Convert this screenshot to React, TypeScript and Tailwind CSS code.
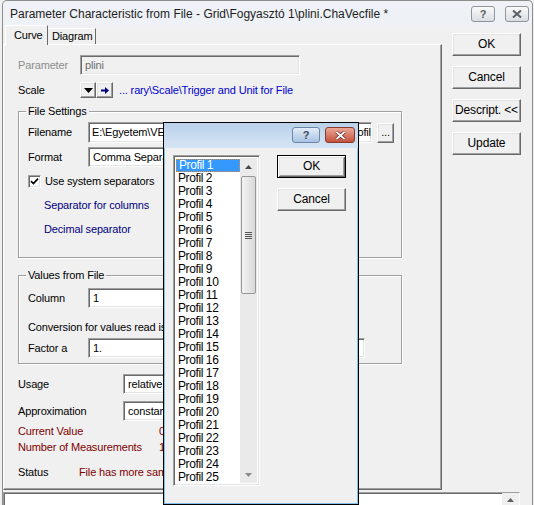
import React from 'react';

const ui = "font-['Liberation_Sans',Arial,sans-serif]";

const raised =
  'border border-t-white border-l-white border-r-[#696969] border-b-[#696969] shadow-[inset_-1px_-1px_0_#a0a0a0,inset_1px_1px_0_#e3e3e3]';
const sunken =
  'border border-t-[#a0a0a0] border-l-[#a0a0a0] border-r-white border-b-white shadow-[inset_1px_1px_0_#696969,inset_-1px_-1px_0_#e3e3e3]';

function Btn({ children, def = false }: { children: React.ReactNode; def?: boolean }) {
  return (
    <div
      className={`flex h-[23px] w-[69px] items-center justify-center bg-[#f0f0f0] text-[12px] ${
        def
          ? 'border border-black shadow-[inset_1px_1px_0_white,inset_-1px_-1px_0_#696969,inset_2px_2px_0_#e3e3e3,inset_-2px_-2px_0_#a0a0a0]'
          : raised
      }`}
    >
      {children}
    </div>
  );
}

function Field({ w, children, gray = false }: { w: string; children?: React.ReactNode; gray?: boolean }) {
  return (
    <div
      className={`flex h-[20px] shrink-0 items-center overflow-hidden whitespace-nowrap pl-[4px] ${sunken} ${w} ${
        gray ? 'bg-[#f0f0f0] text-[#6d6d6d]' : 'bg-white'
      }`}
    >
      {children}
    </div>
  );
}

function Group({ title, h, children }: { title: string; h: string; children: React.ReactNode }) {
  return (
    <div
      className={`relative w-[384px] ${h} border border-[#a0a0a0] shadow-[1px_1px_0_white,inset_1px_1px_0_white] pl-[9px]`}
    >
      <span className="absolute left-[7px] top-[-7px] bg-[#f0f0f0] px-[2px]">{title}</span>
      {children}
    </div>
  );
}

function TitleBtn({ children }: { children: React.ReactNode }) {
  return (
    <div className="flex h-[16px] w-[24px] items-center justify-center rounded-[3px] border border-[#8f959c] bg-gradient-to-b from-[#fafafa] to-[#dadde2] text-[11px] font-bold text-[#5a5f66]">
      {children}
    </div>
  );
}

const profiles = Array.from({ length: 25 }, (_, i) => `Profil ${i + 1}`);

export default function App() {
  return (
    <div
      className={`relative h-[505px] w-[534px] overflow-hidden bg-[#f0f0f0] text-[11px] leading-[13px] tracking-[-0.15px] text-black ${ui}`}
    >
      {/* Main window */}
      <div className="ml-[2px] flex h-[505px] w-[531px] flex-col overflow-hidden rounded-t-[5px] border-x border-t border-[#8c8c8c]">
        {/* Title bar */}
        <div className="flex h-[24px] shrink-0 items-center gap-[10px] rounded-t-[5px] bg-[#eef1f5] pl-[7px] pr-[3px] pt-[2px]">
          <span className="flex-1 text-[12px] tracking-normal text-[#1e1e1e]">
            Parameter Characteristic from File - Grid\Fogyasztó 1\plini.ChaVecfile *
          </span>
          <TitleBtn>?</TitleBtn>
          <TitleBtn>
            <svg width="10" height="8" viewBox="0 0 10 8">
              <path d="M1 0.5l8 7M9 0.5l-8 7" stroke="#5a5f66" strokeWidth="2" />
            </svg>
          </TitleBtn>
        </div>

        <div className="flex shrink-0">
          {/* Tabs + panel */}
          <div className="w-[439px]">
            <div className="flex h-[19px] items-end pl-[2px]">
              <div className="relative z-10 mb-[-1px] flex h-[20px] w-[43px] items-start border-l border-t border-r border-l-white border-t-white border-r-[#696969] bg-[#f0f0f0] pl-[8px] pt-[3px]">
                Curve
              </div>
              <div className="flex h-[16px] w-[48px] items-start border-t border-r border-t-white border-r-[#696969] pl-[4px] pt-[1px]">
                Diagram
              </div>
            </div>
            <div className="flex h-[446px] flex-col border border-t-white border-l-white border-r-[#696969] border-b-[#696969] pl-[14px] shadow-[inset_-1px_-1px_0_#a0a0a0]">
              {/* Parameter */}
              <div className="mt-[10px] flex h-[20px] items-center">
                <span className="w-[62px] text-[#8d8d8d]">Parameter</span>
                <Field w="w-[220px]" gray>
                  plini
                </Field>
              </div>
              {/* Scale */}
              <div className="mt-[7px] flex h-[16px] items-center">
                <span className="w-[62px]">Scale</span>
                <div className={`flex h-[16px] w-[16px] items-center justify-center bg-[#f0f0f0] ${raised}`}>
                  <svg width="9" height="5" viewBox="0 0 9 5">
                    <path d="M0 0h9L4.5 5z" fill="black" />
                  </svg>
                </div>
                <div className={`flex h-[16px] w-[17px] items-center justify-center bg-[#f0f0f0] ${raised}`}>
                  <svg width="8" height="7" viewBox="0 0 8 7">
                    <path d="M0 2.5h4V0l4 3.5L4 7V4.5H0z" fill="#00007f" />
                  </svg>
                </div>
                <span className="ml-[6px] text-[#0000cc]">... rary\Scale\Trigger and Unit for File</span>
              </div>

              {/* File Settings */}
              <div className="mt-[13px]">
                <Group title="File Settings" h="h-[147px]">
                  <div className="mt-[10px] flex h-[21px] items-center">
                    <span className="w-[60px]">Filename</span>
                    <div className={`flex h-[21px] w-[284px] items-center overflow-hidden whitespace-nowrap bg-white pl-[3px] ${sunken}`}>
                      E:\Egyetem\VEM\Villamosenergia-rendszerek\Adatok\profil_1.csv
                    </div>
                    <div className={`ml-[5px] flex h-[20px] w-[17px] items-end justify-center bg-[#f0f0f0] pb-[3px] ${raised}`}>
                      ...
                    </div>
                  </div>
                  <div className="mt-[4px] flex h-[20px] items-center">
                    <span className="w-[60px]">Format</span>
                    <Field w="w-[200px]">Comma Separated Values</Field>
                  </div>
                  <div className="mt-[8px] flex h-[13px] items-center">
                    <div className={`flex h-[13px] w-[13px] items-center justify-center bg-white ${sunken}`}>
                      <svg width="9" height="9" viewBox="0 0 9 9">
                        <path d="M1 4.2l2.4 2.4L8 1.6" stroke="black" strokeWidth="1.7" fill="none" />
                      </svg>
                    </div>
                    <span className="ml-[4px]">Use system separators</span>
                  </div>
                  <div className="ml-[16px] mt-[9px] flex h-[16px] items-center text-[#000080]">Separator for columns</div>
                  <div className="ml-[16px] mt-[8px] flex h-[16px] items-center text-[#000080]">Decimal separator</div>
                </Group>
              </div>

              {/* Values from File */}
              <div className="mt-[17px]">
                <Group title="Values from File" h="h-[89px]">
                  <div className="mt-[12px] flex h-[20px] items-center">
                    <span className="w-[60px]">Column</span>
                    <Field w="w-[200px]">1</Field>
                  </div>
                  <div className="mt-[11px] flex h-[16px] w-[136px] items-center overflow-hidden whitespace-nowrap">
                    Conversion for values read is
                  </div>
                  <div className="mt-[3px] flex h-[20px] items-center">
                    <span className="w-[60px]">Factor a</span>
                    <Field w="w-[277px]">1.</Field>
                  </div>
                </Group>
              </div>

              {/* Usage / Approximation */}
              <div className="mt-[10px] flex h-[20px] items-center">
                <span className="w-[105px]">Usage</span>
                <Field w="w-[150px]">relative in %</Field>
              </div>
              <div className="mt-[7px] flex h-[20px] items-center">
                <span className="w-[105px]">Approximation</span>
                <Field w="w-[150px]">constant</Field>
              </div>
              <div className="mt-[3px] flex h-[14px] items-center text-[#800000]">
                <span className="w-[141px]">Current Value</span>
                <span>0</span>
              </div>
              <div className="mt-[2px] flex h-[14px] items-center text-[#800000]">
                <span className="w-[141px]">Number of Measurements</span>
                <span>1</span>
              </div>
              <div className="mt-[11px] flex h-[14px] items-center">
                <span className="w-[61px]">Status</span>
                <span className="w-[84px] overflow-hidden whitespace-nowrap text-[#800000]">File has more samples</span>
              </div>
            </div>
          </div>

          {/* Right buttons */}
          <div className="flex flex-col gap-[10px] pl-[10px] pt-[8px]">
            <Btn>OK</Btn>
            <Btn>Cancel</Btn>
            <Btn>Descript. &lt;&lt;</Btn>
            <Btn>Update</Btn>
          </div>
        </div>

        {/* Description edit */}
        <div className={`mt-[2px] flex h-[20px] w-[517px] shrink-0 justify-end bg-white ${sunken}`}>
          <div className="flex h-full w-[17px] justify-center bg-[#f0f0f0] pt-[5px]">
            <svg width="7" height="4" viewBox="0 0 7 4">
              <path d="M0 4L3.5 0L7 4z" fill="#606060" />
            </svg>
          </div>
        </div>
      </div>

      {/* Popup selection dialog */}
      <div className="absolute left-[163px] top-[122px] flex h-[383px] w-[196px] flex-col border border-black bg-[#f0f0f0] shadow-[inset_0_0_0_1px_#7fc0ef]">
        <div className="flex h-[25px] shrink-0 items-start justify-end gap-[5px] bg-gradient-to-b from-[#b9d1ea] to-[#d6e5f4] pr-[3px] pt-[4px]">
          <div className="flex h-[16px] w-[28px] items-center justify-center rounded-[3px] border border-[#6f87a6] bg-gradient-to-b from-[#e3ecf7] to-[#a9c3e3] text-[11px] font-bold text-[#3c4a5c]">
            ?
          </div>
          <div className="flex h-[16px] w-[30px] items-center justify-center rounded-[3px] border border-[#8b3a2d] bg-gradient-to-b from-[#e9a797] to-[#c4513c]">
            <svg width="11" height="9" viewBox="0 0 11 9">
              <path d="M1.5 1l8 7M9.5 1l-8 7" stroke="#5a1d14" strokeWidth="3.2" />
              <path d="M1.5 1l8 7M9.5 1l-8 7" stroke="white" strokeWidth="1.8" />
            </svg>
          </div>
        </div>
        <div className="mt-[7px] flex pl-[9px]">
          {/* Listbox */}
          <div className={`flex h-[331px] w-[87px] bg-white p-[2px] ${sunken}`}>
            <div className="flex-1 overflow-hidden pt-[1px] text-[12px] leading-[13px] tracking-[-0.4px]">
              {profiles.map((p, i) => (
                <div
                  key={p}
                  className={`h-[13px] whitespace-nowrap pl-[2px] ${
                    i === 0 ? 'border border-dotted border-[#e08a3c] bg-[#3399ff] pl-[1px] leading-[11px] text-white' : ''
                  }`}
                >
                  {p}
                </div>
              ))}
            </div>
            {/* scrollbar */}
            <div className="flex w-[17px] flex-col items-center bg-[#eaeaea]">
              <div className="flex h-[17px] w-full items-center justify-center">
                <svg width="7" height="4" viewBox="0 0 7 4">
                  <path d="M0 4L3.5 0L7 4z" fill="#4a4a4a" />
                </svg>
              </div>
              <div className="mt-[1px] flex h-[118px] w-[15px] items-center justify-center rounded-[2px] border border-[#979797] bg-gradient-to-r from-[#f3f3f3] to-[#d9d9d9]">
                <div className="flex flex-col gap-[1px]">
                  <div className="h-[1px] w-[7px] bg-[#555]" />
                  <div className="h-[1px] w-[7px] bg-[#555]" />
                  <div className="h-[1px] w-[7px] bg-[#555]" />
                  <div className="h-[1px] w-[7px] bg-[#555]" />
                </div>
              </div>
              <div className="flex-1" />
              <div className="flex h-[17px] w-full items-center justify-center">
                <svg width="7" height="4" viewBox="0 0 7 4">
                  <path d="M0 0L3.5 4L7 0z" fill="#8a8a8a" />
                </svg>
              </div>
            </div>
          </div>
          <div className="ml-[17px] flex flex-col gap-[10px]">
            <Btn def>OK</Btn>
            <Btn>Cancel</Btn>
          </div>
        </div>
      </div>
    </div>
  );
}
